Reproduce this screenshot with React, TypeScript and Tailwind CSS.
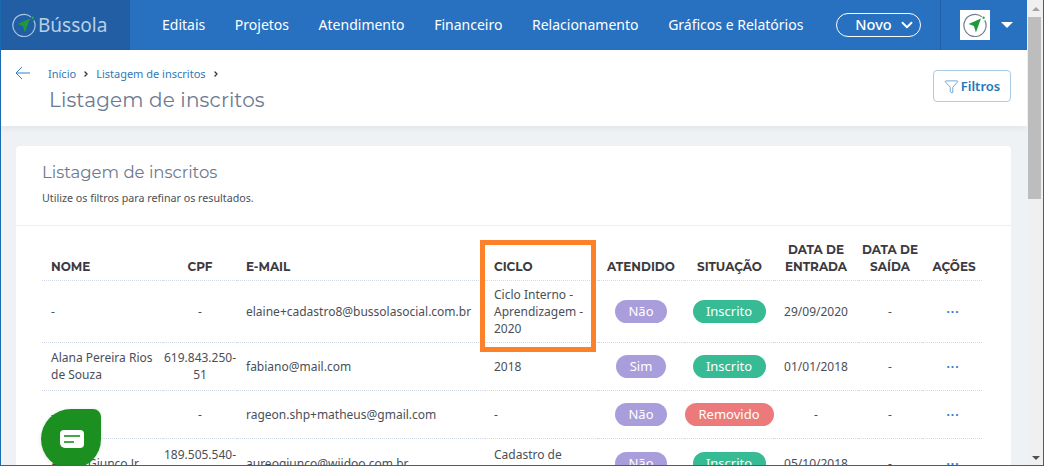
import { ChevronDown, ChevronRight, Filter } from "lucide-react";

const nav = ["Editais", "Projetos", "Atendimento", "Financeiro", "Relacionamento", "Gráficos e Relatórios"];

const heading = "font-['Montserrat','Inter',sans-serif]";

function Compass({ size, ring }: { size: number; ring: string }) {
  return (
    <svg width={size} height={size} viewBox="0 0 26 26" fill="none">
      <path d="M20.5 4.2A12 12 0 1 0 23.6 8" stroke={ring} strokeWidth="1.3" />
      <path d="M19.5 6 6 12l5.8 2.2L14 21z" fill="#1f9a3a" />
      <circle cx="22.3" cy="5.2" r="1.3" fill="#22b14c" />
    </svg>
  );
}

function Badge({ text, color, w }: { text: string; color: string; w: string }) {
  return <span className={`inline-block h-[23px] rounded-full text-[13px] leading-[23px] text-white text-center ${color} ${w}`}>{text}</span>;
}

const nao = <Badge text="Não" color="bg-[#a99edb]" w="w-[52px]" />;
const sim = <Badge text="Sim" color="bg-[#a99edb]" w="w-[50px]" />;
const inscrito = <Badge text="Inscrito" color="bg-[#36bb94]" w="w-[73px]" />;
const removido = <Badge text="Removido" color="bg-[#ec7a7a]" w="w-[89px]" />;

const rows = [
  { h: "h-[62px]", nome: "-", cpf: "-", email: "elaine+cadastro8@bussolasocial.com.br", ciclo: "Ciclo Interno - Aprendizagem - 2020", at: nao, sit: inscrito, ent: "29/09/2020" },
  { h: "h-[48px]", nome: "Alana Pereira Rios de Souza", cpf: "619.843.250-51", email: "fabiano@mail.com", ciclo: "2018", at: sim, sit: inscrito, ent: "01/01/2018" },
  { h: "h-[48px]", nome: "-", cpf: "-", email: "rageon.shp+matheus@gmail.com", ciclo: "-", at: nao, sit: removido, ent: "-" },
  { h: "h-[50px]", nome: "Aureo Giunco Jr", cpf: "189.505.540-00", email: "aureogiunco@wiidoo.com.br", ciclo: "Cadastro de Ciclo", at: nao, sit: inscrito, ent: "05/10/2018" },
];

export default function App() {
  return (
    <div className="relative h-[466px] w-[1044px] overflow-hidden bg-[#eef2f5] font-['Noto_Sans',sans-serif] text-[12px] text-[#4a4f57]">
      <div className="flex h-full">
        <div className="flex h-full w-[1027px] flex-col overflow-hidden">
          <header className="flex h-[50px] shrink-0 items-center bg-[#2870c0] text-white">
            <div className="flex h-full w-[130px] items-center gap-[2px] bg-[#215ea3] pl-[12px]">
              <Compass size={24} ring="#a9c6e2" />
              <span className="text-[19px] text-[#b9d0e6]">Bússola</span>
            </div>
            <nav className="-mt-[1px] flex gap-[29.6px] pl-[32px] text-[14px]">
              {nav.map((item) => (
                <span key={item}>{item}</span>
              ))}
            </nav>
            <button className="ml-[33px] flex h-[24px] w-[85px] items-center gap-[6px] rounded-full border border-white pl-[18px] text-[14.5px] font-medium">
              Novo
              <ChevronDown size={18} strokeWidth={2.5} />
            </button>
            <div className="ml-[19px] flex h-full items-center border-l border-[#215ea3] pl-[19px]">
              <div className="flex h-[30px] w-[30px] items-center justify-center bg-white">
                <Compass size={24} ring="#6f7f95" />
              </div>
              <div className="ml-[11px] h-0 w-0 border-x-[6px] border-t-[6px] border-x-transparent border-t-white" />
            </div>
          </header>

          <section className="flex h-[76px] shrink-0 bg-white shadow-[0_2px_6px_rgba(60,80,110,0.08)]">
            <svg width="15" height="14" viewBox="0 0 15 14" fill="none" stroke="#2f80c8" strokeWidth="1" className="ml-[15px] mt-[16px] shrink-0">
              <path d="M15 7H1M7 1 1 7l6 6" />
            </svg>
            <div className="ml-[18px] flex-1">
              <div className="mt-[16px] flex items-center text-[11px] leading-[15px] text-[#2f78b8]">
                <span>Início</span>
                <ChevronRight size={8} strokeWidth={4} className="mx-[6px] text-[#333]" />
                <span>Listagem de inscritos</span>
                <ChevronRight size={8} strokeWidth={4} className="mx-[6px] text-[#333]" />
              </div>
              <h1 className={`${heading} ml-[1px] mt-[6px] text-[20px] leading-[26px] font-normal tracking-[0.15px] text-[#6b7a90]`}>Listagem de inscritos</h1>
            </div>
            <button className="mr-[16px] mt-[20px] flex h-[32px] w-[78px] items-center justify-center gap-[2px] rounded border border-[#a9cde6] pt-[1px] text-[13px] font-semibold text-[#2277b9]">
              <Filter size={15} strokeWidth={1} />
              Filtros
            </button>
          </section>

          <main className="mx-[16px] mt-[20px] flex-1 rounded-t bg-white">
            <div className="h-[80px] border-b border-[#e8eff7] pl-[26px] pt-[14px]">
              <h2 className={`${heading} text-[16.5px] leading-[24px] font-normal text-[#6b7a90]`}>Listagem de inscritos</h2>
              <p className="mt-[7px] text-[10.7px] leading-[14px]">Utilize os filtros para refinar os resultados.</p>
            </div>
            <table className="ml-[26px] mt-[14px] w-[940px] table-fixed border-collapse">
              <colgroup>
                <col className="w-[121px]" />
                <col className="w-[74px]" />
                <col className="w-[248px]" />
                <col className="w-[113px]" />
                <col className="w-[86px]" />
                <col className="w-[90px]" />
                <col className="w-[84px]" />
                <col className="w-[64px]" />
                <col className="w-[60px]" />
              </colgroup>
              <thead>
                <tr className={`${heading} h-[40px] border-b border-dotted border-[#cfdcea] align-bottom text-[12px] leading-[17px] font-bold text-[#3d3a3f]`}>
                  <th className="pb-[5px] pl-[9px] text-left">NOME</th>
                  <th className="pb-[5px] text-center">CPF</th>
                  <th className="pb-[5px] pl-[9px] text-left">E-MAIL</th>
                  <th className="pb-[5px] pl-[9px] text-left">CICLO</th>
                  <th className="pb-[5px] text-center">ATENDIDO</th>
                  <th className="pb-[5px] pl-[1px] text-center">SITUAÇÃO</th>
                  <th className="pb-[5px] text-center">DATA DE ENTRADA</th>
                  <th className="pb-[5px] text-center">DATA DE SAÍDA</th>
                  <th className="pb-[5px] pl-[4px] text-center">AÇÕES</th>
                </tr>
              </thead>
              <tbody className="leading-[17px]">
                {rows.map((r) => (
                  <tr key={r.email} className={`${r.h} border-b border-dotted border-[#cfdcea]`}>
                    <td className="pl-[9px]">{r.nome}</td>
                    <td className="text-center">{r.cpf}</td>
                    <td className="pl-[9px]">{r.email}</td>
                    <td className="px-[9px]">{r.ciclo}</td>
                    <td className="text-center">{r.at}</td>
                    <td className="text-center">{r.sit}</td>
                    <td className="text-center">{r.ent}</td>
                    <td className="text-center">-</td>
                    <td className="pl-[2px] text-center font-bold tracking-[1px] text-[#2f78c8]">···</td>
                  </tr>
                ))}
              </tbody>
            </table>
          </main>
        </div>

        <div className="flex h-full w-[17px] flex-col bg-[#f0f0f0]">
          <div className="flex h-[17px] items-center justify-center">
            <div className="h-0 w-0 border-x-[4px] border-b-[4px] border-x-transparent border-b-[#a3a3a3]" />
          </div>
          <div className="ml-[1px] mr-[3px] h-[182px] bg-[#bdbdbd]" />
          <div className="flex-1" />
          <div className="flex h-[17px] items-center justify-center">
            <div className="h-0 w-0 border-x-[4px] border-t-[4px] border-x-transparent border-t-[#505050]" />
          </div>
        </div>
      </div>

      <div className="absolute left-[480px] top-[240px] h-[112px] w-[116px] border-[5px] border-[#fd8128]" />

      <div className="absolute left-[41px] top-[409px] flex h-[60px] w-[60px] items-center justify-center rounded-[50%_8px_50%_50%] bg-[#1b8f1f] pl-[2px] shadow-[0_1px_4px_rgba(0,0,0,0.12)]">
        <svg width="24" height="18" viewBox="0 0 24 18">
          <path d="M4 0h16a4 4 0 0 1 4 4v10a4 4 0 0 1-4 4H5a5 5 0 0 1-5-5V4a4 4 0 0 1 4-4z" fill="#fff" />
          <path d="M4 6h16" stroke="#1b8f1f" strokeWidth="1.6" />
          <path d="M4 12h10" stroke="#1b8f1f" strokeWidth="1.6" />
        </svg>
      </div>

      <div className="pointer-events-none absolute inset-0 border-x border-b border-[#1b6ab0]" />
    </div>
  );
}
